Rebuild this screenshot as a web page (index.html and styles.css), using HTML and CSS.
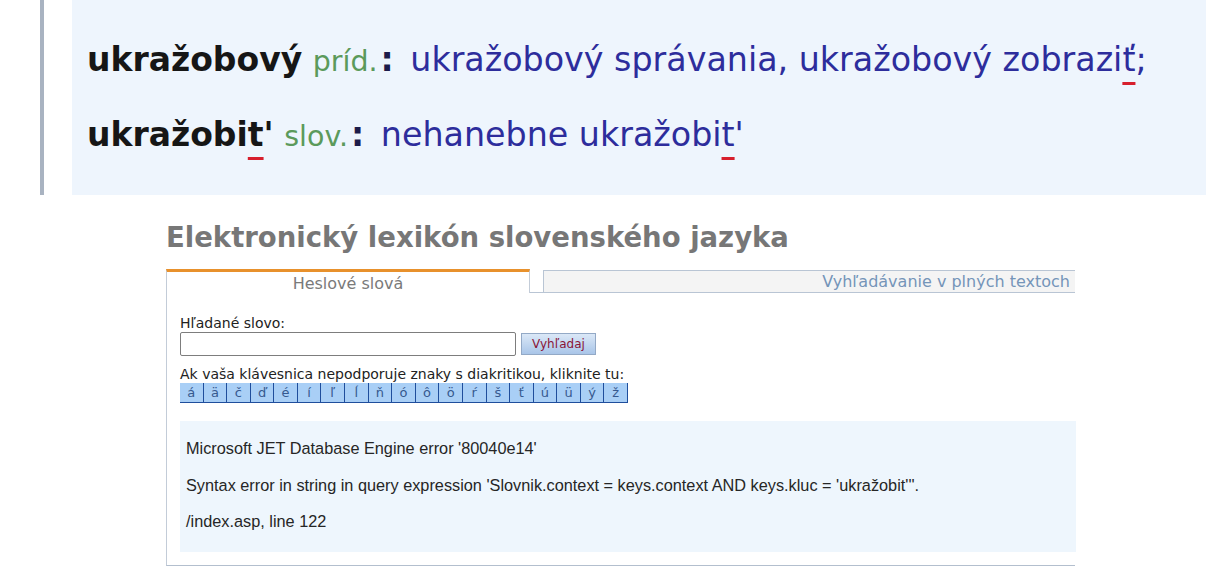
FILE: index.html
```html
<!DOCTYPE html>
<html lang="sk">
<head>
<meta charset="utf-8">
<title>Elektronický lexikón slovenského jazyka</title>
<link rel="stylesheet" href="styles.css">
</head>
<body>
<div class="quote">
  <div class="entry">
    <p class="line"><b class="head">ukražobový</b> <span class="pos">príd.</span><span class="colon">:</span> <span class="ex">ukražobový správania, ukražobový zobrazi<span class="mark">ť</span>;</span></p>
    <p class="line"><b class="head">ukražobi<span class="mark">t</span>'</b> <span class="pos">slov.</span><span class="colon">:</span> <span class="ex">nehanebne ukražobi<span class="mark">t</span>'</span></p>
  </div>
</div>

<div class="page">
  <h1 class="title">Elektronický lexikón slovenského jazyka</h1>
  <div class="tabs">
    <div class="tab tab-active">Heslové slová</div>
    <div class="tab-gap"></div>
    <div class="tab tab-other">Vyhľadávanie v plných textoch</div>
  </div>
  <div class="panel">
    <form class="search">
      <label class="label" for="q">Hľadané slovo:</label>
      <div class="search-row">
        <input class="input" id="q" type="text">
        <button class="btn" type="button">Vyhľadaj</button>
      </div>
      <div class="hint">Ak vaša klávesnica nepodporuje znaky s diakritikou, kliknite tu:</div>
      <div class="chars">
        <span class="ch">á</span><span class="ch">ä</span><span class="ch">č</span><span class="ch">ď</span><span class="ch">é</span><span class="ch">í</span><span class="ch">ľ</span><span class="ch">ĺ</span><span class="ch">ň</span><span class="ch">ó</span><span class="ch">ô</span><span class="ch">ö</span><span class="ch">ŕ</span><span class="ch">š</span><span class="ch">ť</span><span class="ch">ú</span><span class="ch">ü</span><span class="ch">ý</span><span class="ch">ž</span>
      </div>
    </form>
    <div class="error">
      <p>Microsoft JET Database Engine error '80040e14'</p>
      <p>Syntax error in string in query expression 'Slovnik.context = keys.context AND keys.kluc = 'ukražobit'''.</p>
      <p>/index.asp, line 122</p>
    </div>
  </div>
</div>
</body>
</html>
```

FILE: styles.css
```css
* { box-sizing: border-box; }

html, body {
  margin: 0;
  padding: 0;
  background: #ffffff;
}

body {
  font-family: "DejaVu Sans", Verdana, sans-serif;
  color: #222;
  width: 1206px;
  overflow: hidden;
}

/* ---------- top quoted entry ---------- */
.quote {
  margin-left: 40px;
  border-left: 4px solid #a9b3c1;
  padding-left: 28px;
}

.entry {
  background: #eef5fd;
  height: 195px;
  padding: 40px 0 0 15px;
  display: flex;
  flex-direction: column;
  gap: 33px;
}

.line {
  margin: 0;
  font-size: 33px;
  line-height: 40px;
  white-space: nowrap;
}

.head {
  font-weight: bold;
  color: #161616;
}

.pos {
  color: #5b9a5b;
  font-size: 28.5px;
}

.colon {
  color: #1c1c4a;
  font-weight: bold;
  margin-left: 3px;
  margin-right: 6px;
}

.ex {
  color: #2d2d9c;
  font-size: 33.3px;
}

.mark {
  text-decoration: underline;
  text-decoration-color: #d71f2d;
  text-decoration-thickness: 3px;
  text-underline-offset: 11px;
}

/* ---------- lexicon page ---------- */
.page {
  margin-left: 166px;
  width: 909px;
  padding-top: 25px;
}

.title {
  margin: 0;
  font-size: 27.5px;
  line-height: 34px;
  font-weight: bold;
  color: #777777;
}

.tabs {
  margin-top: 15px;
  display: flex;
  height: 24px;
}

.tab {
  font-size: 16px;
  line-height: 20px;
}

.tab-active {
  width: 364px;
  border-top: 3px solid #e8912c;
  border-left: 1px solid #c3ccd8;
  border-right: 1px solid #c3ccd8;
  color: #7a7a7a;
  text-align: center;
  padding-top: 2px;
}

.tab-gap {
  width: 13px;
  border-bottom: 1px solid #b9c5d4;
}

.tab-other {
  flex: 1;
  margin-top: 1px;
  background: #f4f4f4;
  border: 1px solid #b9c5d4;
  border-right: none;
  color: #7595b9;
  text-align: right;
  padding-right: 5px;
  line-height: 21px;
}

.panel {
  border-left: 1px solid #c3ccd8;
  border-bottom: 1px solid #b3bfce;
  padding: 22px 0 13px 13px;
}

.search {
  margin: 0;
}

.label {
  display: block;
  font-size: 14px;
  line-height: 17px;
  color: #222;
}

.search-row {
  display: flex;
  align-items: center;
  gap: 5px;
}

.input {
  width: 336px;
  height: 24px;
  border: 1px solid #7d7d7d;
  border-radius: 2px;
  margin: 0;
  padding: 0;
}

.btn {
  width: 75px;
  height: 22px;
  margin: 0;
  padding: 0;
  border: 1px solid #93a9c6;
  background: linear-gradient(#dbe8f7, #a9c5e8);
  color: #8a1538;
  font-family: "DejaVu Sans", Verdana, sans-serif;
  font-size: 12px;
}

.hint {
  margin-top: 10px;
  font-size: 14px;
  line-height: 17px;
  color: #222;
}

.chars {
  display: grid;
  grid-template-columns: repeat(19, 1fr);
  width: 448px;
  height: 20px;
  border-bottom: 1px solid #1f4e9c;
}

.ch {
  background: #a9cff6;
  border-right: 1px solid #1f4e9c;
  color: #36598f;
  font-size: 13px;
  line-height: 19px;
  text-align: center;
}

.error {
  margin-top: 18px;
  width: 896px;
  height: 131px;
  background: #eef6fd;
  padding: 18px 6px 0;
  font-family: "Liberation Sans", Arial, sans-serif;
  font-size: 16.3px;
  line-height: 18px;
  color: #262626;
}

.error p {
  margin: 0 0 18.5px;
}
```
